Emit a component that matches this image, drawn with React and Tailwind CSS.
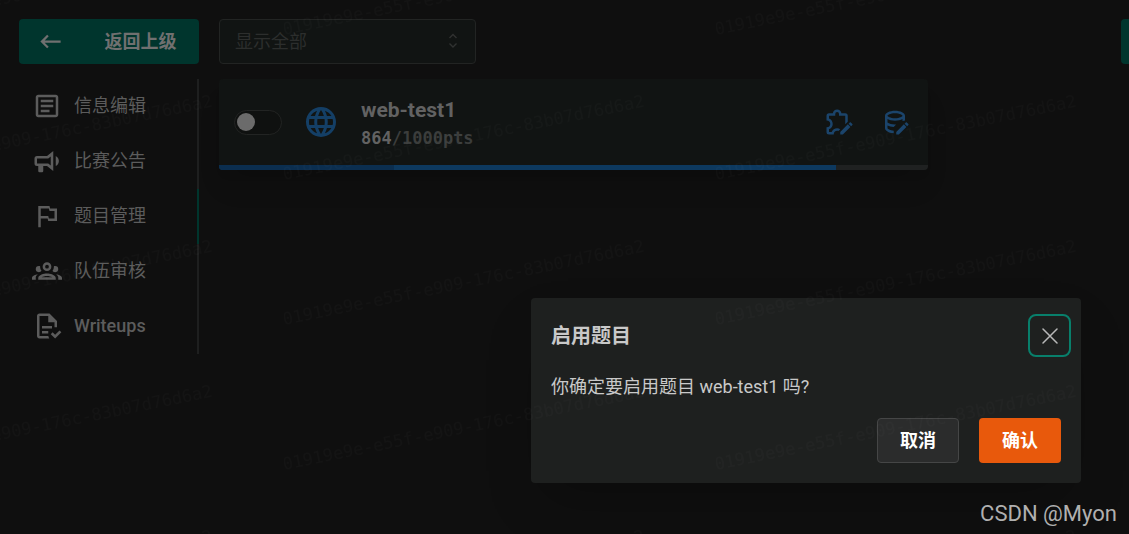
const P = {
  back: "M21,11H6.83L10.41,7.41L9,6L3,12L9,18L10.41,16.58L6.83,13H21V11Z",
  text: "M5,3C3.89,3 3,3.89 3,5V19C3,20.11 3.89,21 5,21H19C20.11,21 21,20.11 21,19V5C21,3.89 20.11,3 19,3H5M5,5H19V19H5V5M7,7V9H17V7H7M7,11V13H17V11H7M7,15V17H14V15H7Z",
  horn: "M12,8H4A2,2 0 0,0 2,10V14A2,2 0 0,0 4,16H5V20A1,1 0 0,0 6,21H8A1,1 0 0,0 9,20V16H12L17,20V4L12,8M15,15.6L13,14H4V10H13L15,8.4V15.6M21.5,12C21.5,13.71 20.54,15.26 19,16V8C20.53,8.75 21.5,10.3 21.5,12Z",
  flag: "M14.5,6H20V16H13L12.5,14H7V21H5V4H14L14.5,6M7,6V12H13L13.5,14H18V8H14L13.5,6H7Z",
  group: "M12,5A3.5,3.5 0 0,0 8.5,8.5A3.5,3.5 0 0,0 12,12A3.5,3.5 0 0,0 15.5,8.5A3.5,3.5 0 0,0 12,5M12,7A1.5,1.5 0 0,1 13.5,8.5A1.5,1.5 0 0,1 12,10A1.5,1.5 0 0,1 10.5,8.5A1.5,1.5 0 0,1 12,7M5.5,8A2.5,2.5 0 0,0 3,10.5C3,11.44 3.53,12.25 4.29,12.68C4.65,12.88 5.06,13 5.5,13C5.94,13 6.35,12.88 6.71,12.68C7.08,12.47 7.39,12.17 7.62,11.81C6.89,10.86 6.5,9.7 6.5,8.5C6.5,8.41 6.5,8.31 6.5,8.22C6.2,8.08 5.86,8 5.5,8M18.5,8C18.14,8 17.8,8.08 17.5,8.22C17.5,8.31 17.5,8.41 17.5,8.5C17.5,9.7 17.11,10.86 16.38,11.81C16.5,12 16.63,12.15 16.78,12.3C16.94,12.45 17.1,12.58 17.29,12.68C17.65,12.88 18.06,13 18.5,13C18.94,13 19.35,12.88 19.71,12.68C20.47,12.25 21,11.44 21,10.5A2.5,2.5 0 0,0 18.5,8M12,14C9.66,14 5,15.17 5,17.5V19H19V17.5C19,15.17 14.34,14 12,14M4.71,14.55C2.78,14.78 0,15.76 0,17.5V19H3V17.07C3,16.06 3.69,15.22 4.71,14.55M19.29,14.55C20.31,15.22 21,16.06 21,17.07V19H24V17.5C24,15.76 21.22,14.78 19.29,14.55M12,16C13.53,16 15.24,16.5 16.23,17H7.77C8.76,16.5 10.47,16 12,16Z",
  doc: "M23.5 17L18.5 22L15 18.5L16.5 17L18.5 19L22 15.5L23.5 17M6 2C4.89 2 4 2.9 4 4V20C4 21.11 4.89 22 6 22H13.81C13.45 21.38 13.2 20.7 13.08 20H6V4H13V9H18V13.08C18.33 13.03 18.67 13 19 13C19.34 13 19.67 13.03 20 13.08V8L14 2M8 12V14H16V12M8 16V18H13V16Z",
  web: "M16.36,14C16.44,13.34 16.5,12.68 16.5,12C16.5,11.32 16.44,10.66 16.36,10H19.74C19.9,10.64 20,11.31 20,12C20,12.69 19.9,13.36 19.74,14M14.59,19.56C15.19,18.45 15.65,17.25 15.97,16H18.92C17.96,17.65 16.43,18.93 14.59,19.56M14.34,14H9.66C9.56,13.34 9.5,12.68 9.5,12C9.5,11.32 9.56,10.65 9.66,10H14.34C14.43,10.65 14.5,11.32 14.5,12C14.5,12.68 14.43,13.34 14.34,14M12,19.96C11.17,18.76 10.5,17.43 10.09,16H13.91C13.5,17.43 12.83,18.76 12,19.96M8,8H5.08C6.03,6.34 7.57,5.06 9.4,4.44C8.8,5.55 8.35,6.75 8,8M5.08,16H8C8.35,17.25 8.8,18.45 9.4,19.56C7.57,18.93 6.03,17.65 5.08,16M4.26,14C4.1,13.36 4,12.69 4,12C4,11.31 4.1,10.64 4.26,10H7.64C7.56,10.66 7.5,11.32 7.5,12C7.5,12.68 7.56,13.34 7.64,14M12,4.03C12.83,5.23 13.5,6.57 13.91,8H10.09C10.5,6.57 11.17,5.23 12,4.03M18.92,8H15.97C15.65,6.75 15.19,5.55 14.59,4.44C16.43,5.07 17.96,6.34 18.92,8M12,2C6.47,2 2,6.5 2,12A10,10 0 0,0 12,22A10,10 0 0,0 22,12A10,10 0 0,0 12,2Z",
  puzzleEdit:
    "M19 7V11.7L17 13.7V7H12V5.5A1.5 1.5 0 0 0 9 5.5V7H4V9.12C5.76 9.8 7 11.5 7 13.5S5.75 17.2 4 17.88V20H6.12C6.8 18.25 8.5 17 10.5 17C11.4 17 12.3 17.2 13 17.7L11.5 19.2C11.2 19.1 10.9 19 10.5 19C9 19 7.8 20.21 7.8 21.7V22H4A2 2 0 0 1 2 20V16.2H2.3C3.79 16.2 5 15 5 13.5S3.79 10.8 2.3 10.8H2V7A2 2 0 0 1 4 5H7.04C7.28 3.3 8.74 2 10.5 2S13.72 3.3 13.96 5H17A2 2 0 0 1 19 7Z M22.7 14.35L21.7 15.35L19.65 13.3L20.65 12.3C20.86 12.09 21.21 12.09 21.42 12.3L22.7 13.58C22.92 13.79 22.92 14.14 22.7 14.35M13 19.94L19.07 13.88L21.12 15.93L15.06 22H13V19.94Z",
  dbEdit:
    "M12 3C7.58 3 4 4.79 4 7V17C4 19.03 7.03 20.71 11 20.95V18.95C7.8 18.68 6 17.45 6 17V14.77C7.35 15.42 9.05 15.85 10.92 15.96L12.87 14C12.58 14 12.3 14 12 14C9.58 14 7.3 13.4 6 12.45V9.64C7.47 10.47 9.61 11 12 11S16.53 10.47 18 9.64V11.2L19.2 10.9L20 10.7V7C20 4.79 16.42 3 12 3M12 9C8.13 9 6 7.5 6 7S8.13 5 12 5S18 6.5 18 7S15.87 9 12 9Z M22.7 14.35L21.7 15.35L19.65 13.3L20.65 12.3C20.86 12.09 21.21 12.09 21.42 12.3L22.7 13.58C22.92 13.79 22.92 14.14 22.7 14.35M13 19.94L19.07 13.88L21.12 15.93L15.06 22H13V19.94Z",
};

const NAV = [
  { icon: P.text, label: "信息编辑" },
  { icon: P.horn, label: "比赛公告" },
  { icon: P.flag, label: "题目管理", active: true },
  { icon: P.group, label: "队伍审核" },
  { icon: P.doc, label: "Writeups", latin: true },
];

function Icon({ d, className }) {
  return (
    <svg viewBox="0 0 24 24" fill="currentColor" aria-hidden="true" className={"shrink-0 " + className}>
      <path d={d} />
    </svg>
  );
}

function Sidebar() {
  return (
    <aside className="flex w-[180px] shrink-0 flex-col gap-[15px]">
      <button className="flex h-[45px] items-center rounded bg-[#00352d] px-[18px] font-bold text-[#707070]">
        <Icon d={P.back} className="size-[27px]" />
        <span className="grow pl-9 text-center">返回上级</span>
      </button>
      <nav className="flex flex-col border-r-2 border-[#1e1f1f]">
        {NAV.map(({ icon, label, active, latin }) => (
          <a
            key={label}
            href="#"
            aria-current={active ? "page" : undefined}
            className={
              "-mr-0.5 flex h-[55px] items-center gap-3 border-r-2 pb-0.5 pl-[13px] text-[#5c5c5c] " +
              (active ? "border-[#00352d] " : "border-transparent ") +
              (latin ? "font-medium" : "font-normal")
            }
          >
            <Icon d={icon} className="size-[30px]" />
            {label}
          </a>
        ))}
      </nav>
    </aside>
  );
}

function ChallengeCard() {
  return (
    <article className="w-full max-w-[709px] overflow-hidden rounded bg-[#111413] shadow-xl">
      <div className="flex h-[86px] items-center px-[15px]">
        <label className="relative block h-[25px] w-12 shrink-0">
          <input
            type="checkbox"
            role="switch"
            aria-label="启用 web-test1"
            className="peer size-full appearance-none rounded-full border border-[#222423] bg-[#0f1110]"
          />
          <span className="absolute top-[3px] left-[3px] size-[18px] rounded-full bg-[#6b6b6b] peer-checked:left-[26px]" />
        </label>
        <Icon d={P.web} className="ml-[21px] size-9 text-[#143f66]" />
        <div className="ml-[22px] grow pt-1">
          <h2 className="text-[21px] leading-[27px] font-bold text-[#626262]">web-test1</h2>
          <p className="font-['DejaVu_Sans_Mono',monospace] text-[17px] leading-7 font-bold text-[#3b3d3c]">
            <span className="text-[#626262]">864</span>/1000pts
          </p>
        </div>
        <div className="flex gap-[26px] pr-[3px] text-[#1b446b]">
          <button aria-label="编辑题目">
            <Icon d={P.puzzleEdit} className="size-[30px]" />
          </button>
          <button aria-label="编辑附件">
            <Icon d={P.dbEdit} className="size-[30px]" />
          </button>
        </div>
      </div>
      <div className="h-[5px] bg-[#1f2121]">
        <div className="flex h-full w-[87%] bg-[#0d395f]">
          <div className="w-[175px] bg-[#0b2e4f]" />
        </div>
      </div>
    </article>
  );
}

function ConfirmDialog() {
  return (
    <div className="absolute inset-0 flex items-end justify-end pr-12 pb-[51px]">
      <section
        role="dialog"
        aria-labelledby="dialog-title"
        className="w-[550px] rounded bg-[#1e201f] pt-4 pb-5 pl-5 text-[#c9c9c9] shadow-2xl"
      >
        <header className="flex items-center justify-between pr-[10px]">
          <h2 id="dialog-title" className="text-xl font-bold">启用题目</h2>
          <button
            aria-label="关闭"
            className="flex size-[43px] items-center justify-center rounded-lg border-2 border-[#087f6b] text-[#b8b8b8]"
          >
            <svg viewBox="0 0 16 16" className="size-4" stroke="currentColor" strokeWidth="1.5" strokeLinecap="round" aria-hidden="true">
              <path d="M1 1L15 15M15 1L1 15" />
            </svg>
          </button>
        </header>
        <p className="mt-4 leading-7">你确定要启用题目 web-test1 吗?</p>
        <footer className="mt-[17px] flex justify-end gap-5 pr-5 font-bold text-white">
          <button className="h-[45px] w-[82px] rounded border border-[#454646] bg-[#2b2c2c]">取消</button>
          <button className="h-[45px] w-[82px] rounded bg-[#e8590c]">确认</button>
        </footer>
      </section>
    </div>
  );
}

function Watermark() {
  return (
    <svg aria-hidden="true" className="pointer-events-none absolute inset-0 size-full">
      <defs>
        <pattern id="mark" x="284" y="40" width="432" height="145" patternUnits="userSpaceOnUse">
          <text
            x="0"
            y="140"
            transform="rotate(-11.5 0 140)"
            className="fill-white/[0.018] font-['DejaVu_Sans_Mono',monospace] text-[17px]"
          >
            01919e9e-e55f-e909-176c-83b07d76d6a2
          </text>
        </pattern>
      </defs>
      <rect width="100%" height="100%" fill="url(#mark)" />
    </svg>
  );
}

export default function App() {
  return (
    <div className="relative min-h-screen overflow-hidden bg-[#0f0f0f] font-['Roboto','Noto_Sans_CJK_SC',sans-serif] text-lg">
      <div className="flex items-start gap-5 pt-[19px] pl-[19px]">
        <Sidebar />
        <main className="flex min-w-0 grow flex-col gap-[15px]">
          <div className="flex justify-between">
            <div className="relative w-[257px]">
              <select
                aria-label="题目类型"
                className="h-[45px] w-full appearance-none rounded border border-[#222423] bg-[#111413] px-[15px] text-[#2c2e2d]"
              >
                <option>显示全部</option>
              </select>
              <svg
                viewBox="0 0 10 16"
                fill="none"
                stroke="currentColor"
                strokeWidth="1.4"
                aria-hidden="true"
                className="pointer-events-none absolute top-[14px] right-[18px] h-4 w-[10px] text-[#303231]"
              >
                <path d="M1.5 5L5 1.5L8.5 5M1.5 10.5L5 14L8.5 10.5" />
              </svg>
            </div>
            <button aria-label="新建题目" className="h-[45px] w-2 rounded-l bg-[#00352d]" />
          </div>
          <ChallengeCard />
        </main>
      </div>
      <ConfirmDialog />
      <Watermark />
      <p className="absolute right-3 bottom-1 text-[22px] leading-8 text-[#b0b0b0]">CSDN @Myon</p>
    </div>
  );
}
